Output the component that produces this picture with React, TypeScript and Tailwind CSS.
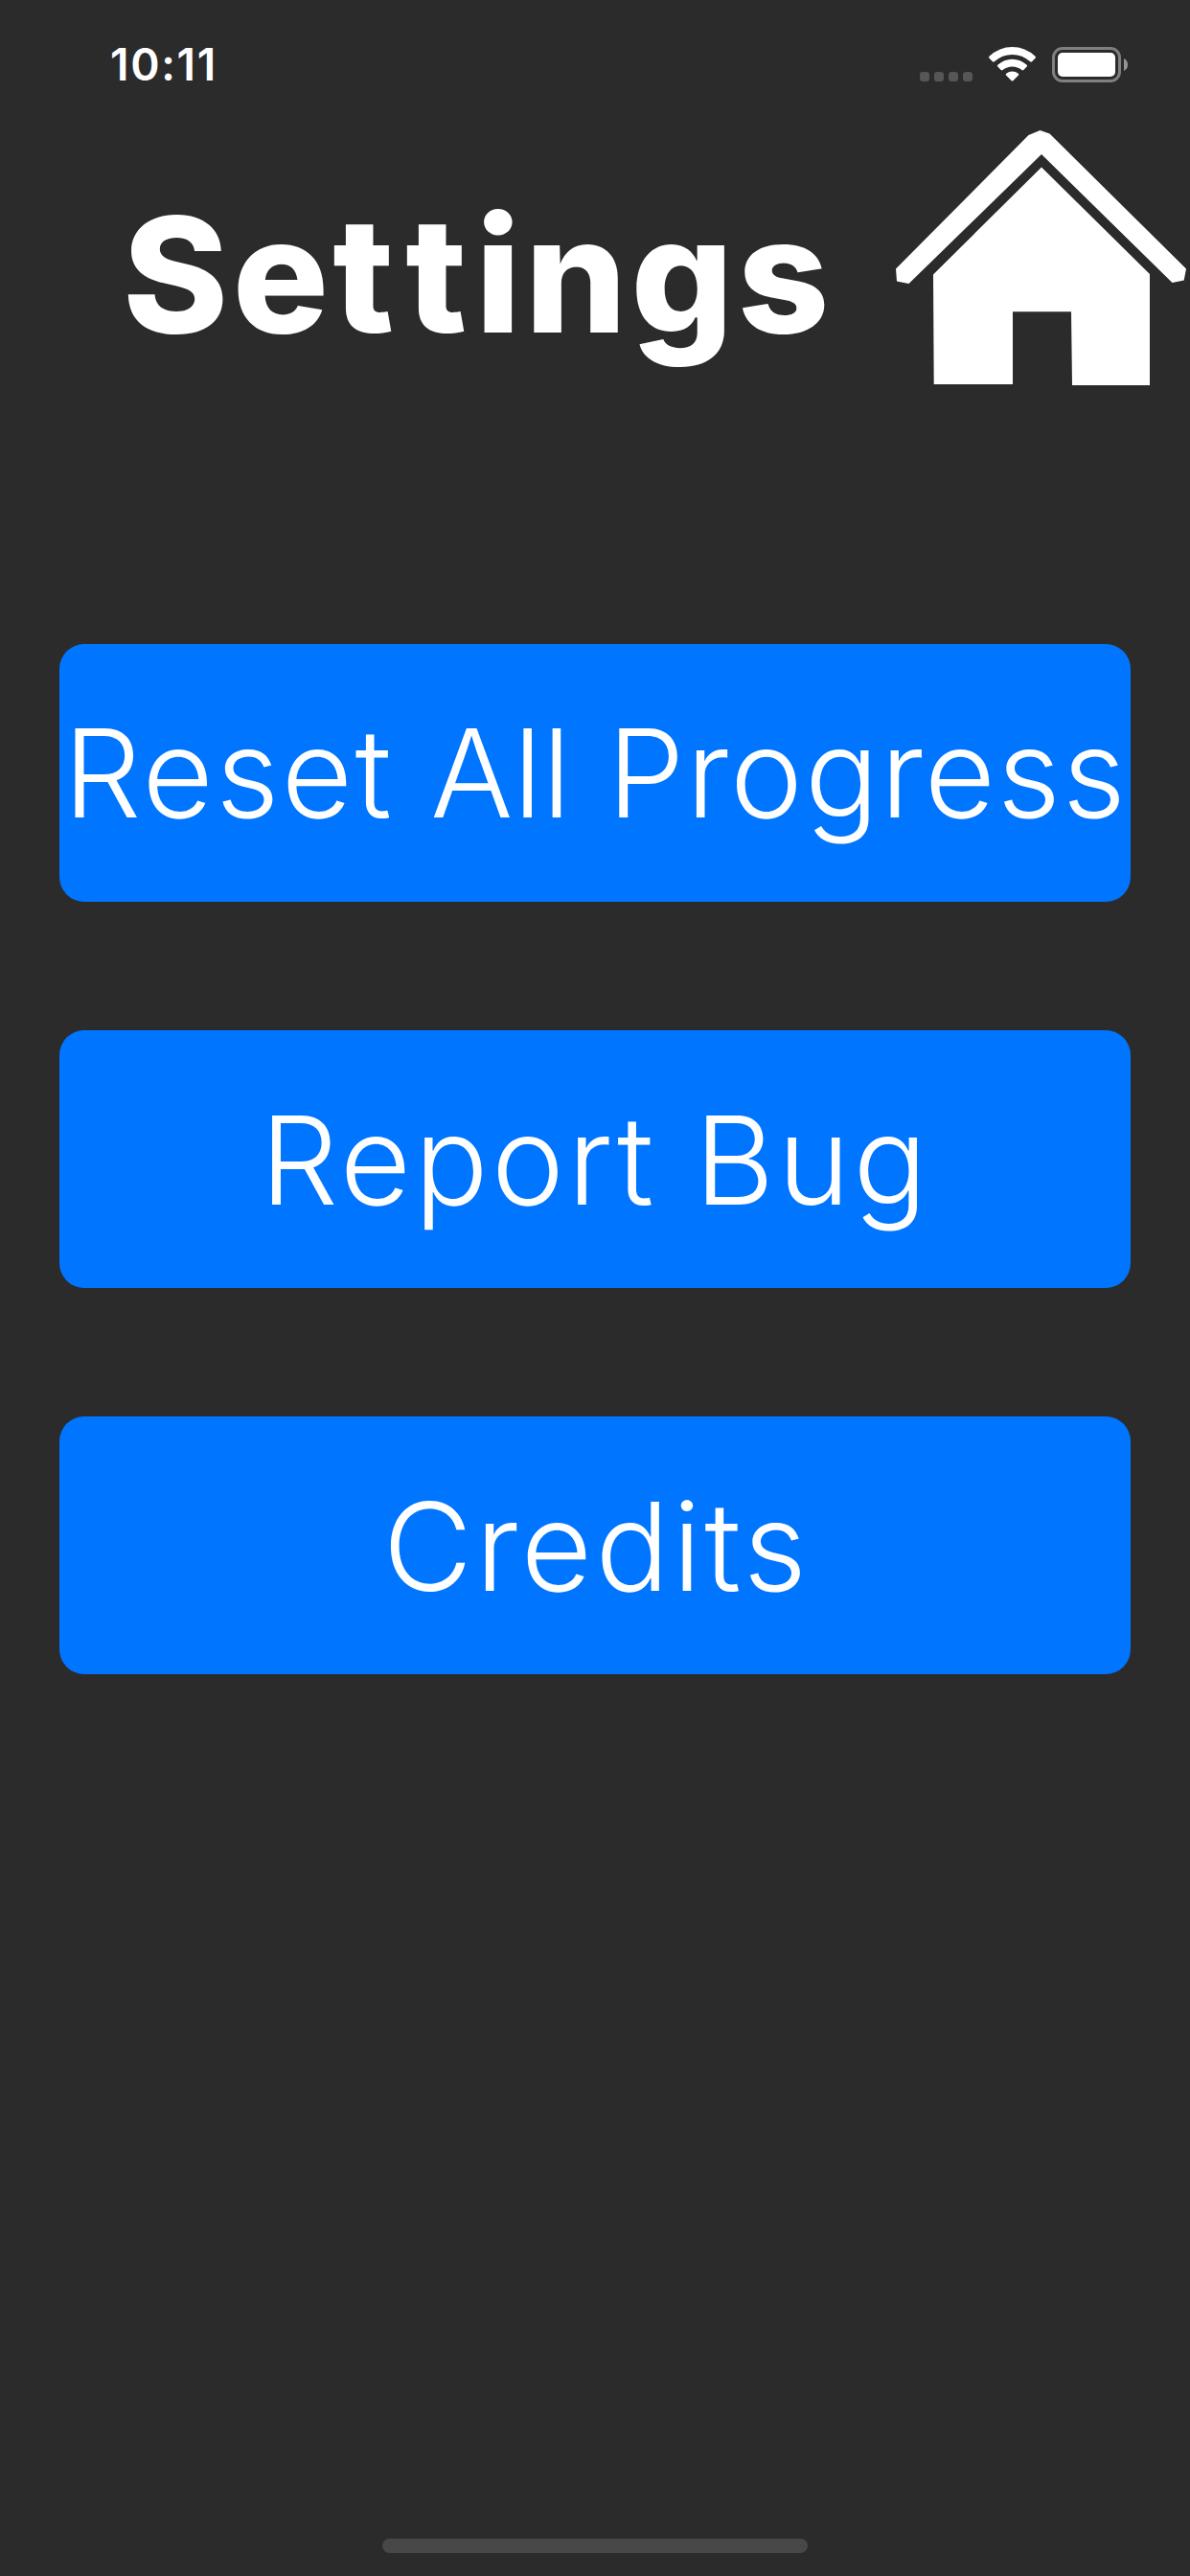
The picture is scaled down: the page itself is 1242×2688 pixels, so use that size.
function StatusIcons() {
  return (
    <svg width="218" height="38" viewBox="960 48 218 38" fill="white">
      <g fill="#565656">
        <rect x="960" y="75" width="10" height="10" rx="3" />
        <rect x="975" y="75" width="10" height="10" rx="3" />
        <rect x="990" y="75" width="10" height="10" rx="3" />
        <rect x="1005" y="75" width="10" height="10" rx="3" />
      </g>
      <path d="M1032.5 60.8Q1031.5 59.8 1032.5 58.8Q1043 49 1056.5 49Q1070 49 1080.500 58.800Q1081.500 59.800 1080.500 60.800L1077 64.300Q1076.100 65.200 1075.200 64.300Q1067 56.900 1056.500 56.900Q1046 56.900 1037.800 64.300Q1036.900 65.200 1036 64.300Z" />
      <path d="M1041.300 69.600Q1040.400 68.700 1041.300 67.800Q1048 61.800 1056.500 61.800Q1065 61.800 1071.700 67.800Q1072.600 68.700 1071.700 69.600L1068.300 73Q1067.400 73.900 1066.500 73.100Q1062 69.400 1056.500 69.400Q1051 69.400 1046.500 73.100Q1045.600 73.900 1044.700 73Z" />
      <path d="M1050 78.400Q1049.200 77.500 1050.200 76.800Q1053 74.500 1056.500 74.500Q1060 74.500 1062.800 76.800Q1063.800 77.500 1063 78.400L1057.300 84.200Q1056.500 85 1055.700 84.200Z" />
      <rect x="1099.500" y="50.500" width="69" height="34" rx="9.500" fill="none" stroke="#808080" strokeWidth="3" />
      <rect x="1104" y="55" width="60" height="25" rx="5" />
      <path d="M1173 61V74Q1177 72 1177 67.500T1173 61Z" fill="#959595" />
    </svg>
  );
}

function HomeIcon() {
  return (
    <svg width="304" height="267" viewBox="935 136 304 267" fill="white">
      <path d="M1073.500 141L1085.500 136L1095.500 139.500L1238 280.500L1235.700 292.500L1223.500 295L1087 161L948.500 296L936 293.500L935 280.500Z" />
      <path d="M1087 174.500L1200 286V402H1119L1118 325.300H1057V401H974.700L974 286.500Z" />
    </svg>
  );
}

export default function App() {
  return (
    <main className="flex h-[2688px] w-[1242px] flex-col overflow-hidden bg-[#2b2b2b] font-['Inter',sans-serif] text-white">
      <header className="flex h-[132px] shrink-0 items-start justify-between pt-[48px] pr-[64px] pl-[115px]">
        <span className="text-[46px] leading-[38px] font-semibold tracking-[1.7px]">10:11</span>
        <StatusIcons />
      </header>
      <section className="flex h-[306px] shrink-0 items-start justify-between pt-1 pr-[3px] pl-[128px]">
        <h1 className="text-[167px] leading-[300px] font-extrabold tracking-[4.4px] whitespace-nowrap">
          Se<span className="tracking-[12px]">t</span><span className="tracking-[9.4px]">t</span>ings
        </h1>
        <HomeIcon />
      </section>
      <nav className="mt-[234px] flex flex-col items-center gap-[134px] text-[128px] font-light whitespace-nowrap">
        <button className="h-[269px] w-[1118px] rounded-[26px] bg-[#0075ff] pt-px pl-px tracking-[1.9px]">
          <span className="tracking-[2.6px]">Reset</span> <span className="tracking-[0.3px]">All</span> Progress
        </button>
        <button className="h-[269px] w-[1118px] rounded-[26px] bg-[#0075ff] pt-[2px] pl-px tracking-[3.5px]">Report Bug</button>
        <button className="h-[269px] w-[1118px] rounded-[26px] bg-[#0075ff] pt-[2px] pl-[3px] tracking-[3.5px]">Credits</button>
      </nav>
      <div className="mt-auto mb-[24px] h-[15px] w-[444px] self-center rounded-full bg-[#484848]" />
    </main>
  );
}
